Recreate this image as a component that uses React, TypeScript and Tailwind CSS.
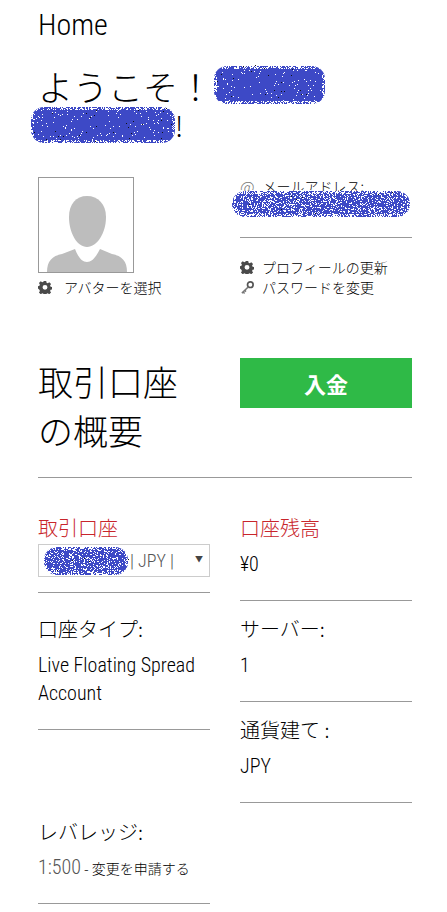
import React from "react";

const JP = { fontFamily: '"Noto Sans CJK JP", "Liberation Sans", sans-serif' };

function Scribble({ w, h, seed = 1, noise = 0.03, className = "" }: { w: number; h: number; seed?: number; noise?: number; className?: string }) {
  let s = seed * 9301 + 49297;
  const rnd = () => {
    s = (s * 9301 + 49297) % 233280;
    return s / 233280;
  };
  const r = Math.min(h / 2, 13);
  const dots: { x: number; y: number; c: string }[] = [];
  const area = w * h;
  for (let i = 0; i < area * 0.9; i++) {
    const x = rnd() * w;
    const y = rnd() * h;
    const edge = Math.min(x, w - x, y, h - y);
    if (edge < 4 && rnd() < 0.5) dots.push({ x, y, c: "#fff" });
    else if (rnd() < noise) dots.push({ x, y, c: "#fff" });
    else if (rnd() < 0.006) dots.push({ x, y, c: "#111" });
  }
  return (
    <svg width={w} height={h} viewBox={`0 0 ${w} ${h}`} className={className}>
      <rect x={1} y={1} width={w - 2} height={h - 2} rx={r} fill="#3d49c6" />
      {dots.map((d, i) => (
        <rect key={i} x={Math.floor(d.x)} y={Math.floor(d.y)} width={1} height={1} fill={d.c} />
      ))}
    </svg>
  );
}

function Gear({ className = "" }: { className?: string }) {
  return (
    <svg viewBox="0 0 16 16" width={14} height={14} className={className}>
      <path
        fill="#4a4a4a"
        fillRule="evenodd"
        d="M6.6 1h2.8l.4 2 1.3.6 1.8-1.1 2 2-1.1 1.8.6 1.3 1.6.4v2.8l-1.6.4-.6 1.3 1.1 1.8-2 2-1.8-1.1-1.3.6-.4 1.6H6.6l-.4-1.6-1.3-.6-1.8 1.1-2-2 1.1-1.8-.6-1.3L0 9.8V7l1.6-.4.6-1.3-1.1-1.8 2-2 1.8 1.1 1.3-.6zM8 5.6a2.8 2.8 0 1 0 0 5.6 2.8 2.8 0 0 0 0-5.6z"
      />
    </svg>
  );
}

function KeyIcon({ className = "" }: { className?: string }) {
  return (
    <svg viewBox="0 0 16 16" width={15} height={15} className={className}>
      <circle cx="11" cy="5" r="3" fill="none" stroke="#555" strokeWidth="1.8" />
      <path d="M9 7.2 2 14M3.2 12.8l1.8 1.4M5 11l1.4 1.4" fill="none" stroke="#777" strokeWidth="1.6" />
    </svg>
  );
}

function AvatarArt() {
  return (
    <svg viewBox="1 1 94 94" width={94} height={94} className="block">
      <path fill="#bdbdbd" d="M49 19C60 19 68 27 68 40C68 56 59 70 49 70C39 70 31 56 31 40C31 27 38 19 49 19z" />
      <path fill="#bdbdbd" d="M9 95C9 84 14 79 24 77L37 72C40 80 44 85 49 85C54 85 58 80 62 72L74 77C84 79 89 84 89 95z" />
    </svg>
  );
}

function Divider({ className = "" }: { className?: string }) {
  return <hr className={`border-0 border-t border-[#999999] ${className}`} />;
}

function Info({ label, children }: { label: string; children: React.ReactNode }) {
  return (
    <div>
      <div style={JP} className="text-[20px] leading-[28px] font-light text-black">
        {label}
      </div>
      <div className="mt-[8px] text-[20px] leading-[28px] font-[350] text-black font-stretch-condensed">{children}</div>
    </div>
  );
}

export default function App() {
  return (
    <div className="w-[447px] h-[912px] overflow-hidden bg-white pl-[38px] pr-[35px] text-black" style={{ fontFamily: 'Roboto, "Noto Sans CJK JP", sans-serif' }}>
      <h1 className="pt-[8px] text-[30px] leading-[34px] font-[350] font-stretch-condensed">Home</h1>

      <h2 style={JP} className="mt-[24px] text-[35px] leading-[39px] font-light">
        <span className="flex items-center">
          ようこそ！
          <Scribble w={113} h={40} seed={3} className="-mt-[1px]" />
        </span>
        <span className="flex items-center h-[39px] -ml-[8px]">
          <Scribble w={146} h={38} seed={5} />
          <span className="text-[28px] leading-none -ml-[1px]">!</span>
        </span>
      </h2>

      <div className="mt-[33px] grid grid-cols-[172px_172px] gap-x-[30px]">
        <div>
          <div className="w-[96px] h-[96px] border border-[#999999]">
            <AvatarArt />
          </div>
          <div className="mt-[5px] flex items-center text-[14px] leading-[18px]" style={JP}>
            <Gear className="mr-[12px]" />
            <span className="font-light">アバターを選択</span>
          </div>
        </div>
        <div>
          <div className="relative h-[60px]">
            <div style={JP} className="flex items-center text-[14px] leading-[18px] font-light">
              <span className="text-[#777777] text-[16px] mr-[8px]">@</span>
              <span>メールアドレス:</span>
            </div>
            <Scribble w={180} h={28} seed={7} noise={0.3} className="absolute left-[-9px] top-[13px]" />
          </div>
          <Divider />
          <div style={JP} className="mt-[19px] text-[14px] leading-[20px] font-light">
            <div className="flex items-center">
              <Gear className="mr-[8px]" />
              プロフィールの更新
            </div>
            <div className="flex items-center">
              <KeyIcon className="mr-[7px]" />
              パスワードを変更
            </div>
          </div>
        </div>
      </div>

      <div className="mt-[61px] grid grid-cols-[172px_172px] gap-x-[30px]">
        <h2 style={JP} className="-mt-[2px] text-[35px] leading-[49px] font-light">
          取引口座
          <br />
          の概要
        </h2>
        <button style={JP} className="h-[50px] bg-[#2fba47] text-white text-[22px] font-bold">
          入金
        </button>
      </div>
      <Divider className="mt-[23px]" />

      <div className="mt-[36px] grid grid-cols-[172px_172px] gap-x-[30px]">
        <div>
          <div style={JP} className="text-[20px] leading-[28px] font-light text-[#c8252b]">
            取引口座
          </div>
          <div className="mt-[2px] relative flex items-center w-[172px] h-[33px] border border-[#cccccc] text-[18px] font-[350] text-[#555555] font-stretch-condensed">
            <Scribble w={86} h={30} seed={11} noise={0.25} className="ml-[4px] mr-[1px]" />
            <span>| JPY |</span>
            <span className="absolute right-[6px] top-[9px] text-[8px] text-[#444444]">▼</span>
          </div>
          <Divider className="mt-[15px]" />

          <div className="mt-[22px]">
            <Info label="口座タイプ:">
              Live Floating Spread
              <br />
              Account
            </Info>
          </div>
          <Divider className="mt-[22px]" />

          <div className="mt-[88px]">
            <div style={JP} className="text-[20px] leading-[28px] font-light text-black">
              レバレッジ:
            </div>
            <div className="mt-[7px] flex items-baseline leading-[28px]">
              <span className="text-[20px] font-[350] text-[#555555] font-stretch-condensed">1:500</span>
              <span style={JP} className="ml-[3px] text-[14px] font-light">
                - 変更を申請する
              </span>
            </div>
          </div>
          <Divider className="mt-[21px]" />
        </div>

        <div>
          <div style={JP} className="text-[20px] leading-[28px] font-light text-[#c8252b]">
            口座残高
          </div>
          <div className="mt-[8px] text-[20px] leading-[28px] font-[350] text-black font-stretch-condensed">¥0</div>
          <Divider className="mt-[22px]" />

          <div className="mt-[14px]">
            <Info label="サーバー:">1</Info>
          </div>
          <Divider className="mt-[22px]" />

          <div className="mt-[14px]">
            <Info label="通貨建て :">JPY</Info>
          </div>
          <Divider className="mt-[22px]" />
        </div>
      </div>
    </div>
  );
}
